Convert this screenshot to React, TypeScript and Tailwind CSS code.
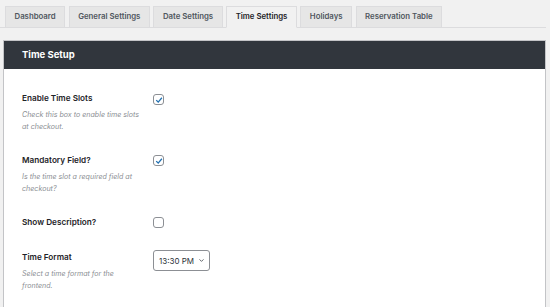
import { ChevronDown } from 'lucide-react';

const tabs = ['Dashboard', 'General Settings', 'Date Settings', 'Time Settings', 'Holidays', 'Reservation Table'];

function Check({ checked }: { checked: boolean }) {
  return (
    <span className="flex h-[11px] w-[11px] items-center justify-center rounded-[3px] border border-[#8c8f94] bg-white">
      {checked && (
        <svg viewBox="0 0 10 10" className="h-[8px] w-[8px]">
          <path d="M1.5 5.2 L4 7.6 L8.6 2.2" fill="none" stroke="#2271b1" strokeWidth="1.6" />
        </svg>
      )}
    </span>
  );
}

function Row({ label, desc, children }: { label: string; desc?: string[]; children: React.ReactNode }) {
  return (
    <div className="flex">
      <div className="w-[131px]">
        <div className="h-4 whitespace-nowrap text-[8.2px] font-semibold leading-4 text-[#1d2327]">{label}</div>
        {desc && (
          <div className="mt-[3px] whitespace-nowrap text-[7.1px] italic leading-3 text-[#8c8f94]">
            {desc.map((d) => (
              <div key={d}>{d}</div>
            ))}
          </div>
        )}
      </div>
      {children}
    </div>
  );
}

export default function App() {
  return (
    <div className="h-[307px] w-[550px] overflow-hidden bg-[#f1f1f1] font-['Inter',sans-serif]">
      <div className="mr-[4px] flex h-[28px] items-end gap-[3.5px] border-b border-[#dcdcde] pl-[5px]">
        {tabs.map((t) => {
          const active = t === 'Time Settings';
          return (
            <div
              key={t}
              className={`-mb-px flex h-[22px] items-center whitespace-nowrap border px-[8.5px] text-[7.8px] font-semibold ${
                active
                  ? 'border-[#dcdcde] border-b-[#f1f1f1] bg-[#f1f1f1] text-[#1d2327]'
                  : 'border-[#dcdcde] bg-[#e6e6e6] text-[#50575e]'
              }`}
            >
              {t}
            </div>
          );
        })}
      </div>
      <div className="ml-[3px] mr-[4px] mt-[12px] border border-[#c3c4c7] bg-white">
        <div className="flex h-[28px] items-center bg-[#31363d] pl-[18px] text-[9.5px] font-bold text-white">
          Time Setup
        </div>
        <div className="flex flex-col gap-[19px] pb-[20px] pl-[18px] pt-[21px]">
          <Row label="Enable Time Slots" desc={['Check this box to enable time slots', 'at checkout.']}>
            <div className="pt-[4px]">
              <Check checked />
            </div>
          </Row>
          <Row label="Mandatory Field?" desc={['Is the time slot a required field at', 'checkout?']}>
            <div className="pt-[3px]">
              <Check checked />
            </div>
          </Row>
          <Row label="Show Description?">
            <div className="pt-[3px]">
              <Check checked={false} />
            </div>
          </Row>
          <Row label="Time Format" desc={['Select a time format for the', 'frontend.']}>
            <div className="pt-[1px]">
              <div className="flex h-[21px] w-[57px] items-center gap-[4px] whitespace-nowrap rounded-[3px] border border-[#8c8f94] bg-white pl-[5px] text-[8px] text-[#2c3338]">
                <span>13:30 PM</span>
                <ChevronDown className="h-[7px] w-[7px]" strokeWidth={2.5} />
              </div>
            </div>
          </Row>
        </div>
      </div>
    </div>
  );
}
